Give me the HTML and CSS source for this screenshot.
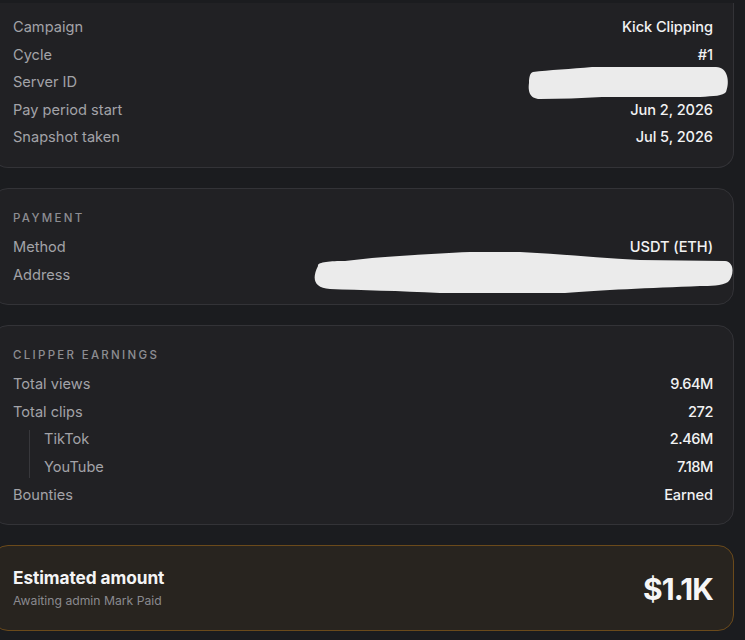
FILE: index.html
```html
<!DOCTYPE html>
<html lang="en">
<head>
<meta charset="utf-8">
<title>Payout details</title>
<link rel="stylesheet" href="styles.css">
</head>
<body>
<div class="topstrip"></div>
<main class="stack">
  <section class="card card-first">
    <div class="row"><span class="label">Campaign</span><span class="value">Kick Clipping</span></div>
    <div class="row"><span class="label">Cycle</span><span class="value">#1</span></div>
    <div class="row"><span class="label">Server ID</span><span class="value"></span></div>
    <div class="row"><span class="label">Pay period start</span><span class="value">Jun 2, 2026</span></div>
    <div class="row"><span class="label">Snapshot taken</span><span class="value">Jul 5, 2026</span></div>
  </section>

  <section class="card card-payment">
    <h2 class="heading">Payment</h2>
    <div class="row"><span class="label">Method</span><span class="value">USDT (ETH)</span></div>
    <div class="row"><span class="label">Address</span><span class="value"></span></div>
  </section>

  <section class="card card-earnings">
    <h2 class="heading">Clipper earnings</h2>
    <div class="row"><span class="label">Total views</span><span class="value num">9.64M</span></div>
    <div class="row"><span class="label">Total clips</span><span class="value num">272</span></div>
    <div class="subgroup">
      <div class="subrow"><span class="label">TikTok</span><span class="value num">2.46M</span></div>
      <div class="subrow"><span class="label">YouTube</span><span class="value num">7.18M</span></div>
    </div>
    <div class="row"><span class="label">Bounties</span><span class="value">Earned</span></div>
  </section>

  <section class="card card-total">
    <div class="total-text">
      <div class="total-title">Estimated amount</div>
      <div class="total-sub">Awaiting admin Mark Paid</div>
    </div>
    <div class="total-amount">$1.1K</div>
  </section>
</main>

<svg class="redactions" width="745" height="640" viewBox="0 0 745 640" aria-hidden="true">
  <path fill="#ebebeb" d="M 533 72 C 548 70, 572 69, 592 67 L 716 67 C 728 67, 730 82, 726 92 C 723 96, 714 96, 700 97 L 602 97 C 582 98, 560 99, 540 99 C 529 99, 528 90, 529 83 C 529 77, 530 73, 533 72 Z"/>
  <path fill="#ebebeb" d="M 318 266 C 317 262, 330 261, 345 261 L 372 258 C 400 256, 440 253, 470 252 L 520 252 C 560 254, 600 258, 640 260 L 725 261 C 735 262, 734 276, 728 282 C 722 286, 710 286, 700 286 C 650 288, 600 290, 565 293 L 440 293 C 400 291, 360 290, 330 289 C 313 288, 312 278, 318 266 Z"/>
</svg>
</body>
</html>
```

FILE: styles.css
```css
* { box-sizing: border-box; }

html, body {
  margin: 0;
  padding: 0;
  background: #1b1c1f;
  font-family: Inter, "Liberation Sans", sans-serif;
  color: #f2f2f3;
  overflow: hidden;
}

body {
  position: relative;
  width: 745px;
  height: 640px;
}

.topstrip {
  height: 3px;
  background: #1b1c1f;
}

.stack {
  margin-left: -8px;
  width: 742px;
  display: flex;
  flex-direction: column;
  gap: 20px;
}

.card {
  background: #212124;
  border: 1px solid #333337;
  border-radius: 16px;
  padding: 21px 20px 16px;
  display: flex;
  flex-direction: column;
}

.card-first {
  border-top: none;
  border-radius: 0 0 16px 16px;
  padding-top: 11px;
  padding-bottom: 15px;
}

.card-payment {
  padding-bottom: 15px;
}

.card-earnings {
  padding-bottom: 15px;
}

.heading {
  margin: 0 0 7px;
  font-size: 11.5px;
  line-height: 17px;
  font-weight: 500;
  letter-spacing: 0.2em;
  text-transform: uppercase;
  color: #8d8d92;
}

.row, .subrow {
  display: flex;
  justify-content: space-between;
  align-items: center;
  font-size: 14.6px;
  line-height: 19.6px;
}

.row { padding: 4px 0; }

.subgroup {
  margin: 4px 0 4px 16px;
  padding-left: 14px;
  border-left: 1px solid #38383c;
  display: flex;
  flex-direction: column;
  gap: 8px;
}

.label {
  color: #a3a3a8;
}

.value {
  color: #f2f2f3;
  font-weight: 500;
  letter-spacing: -0.005em;
}

.value.num {
  letter-spacing: -0.03em;
}

.card-total {
  background: #28241f;
  border-color: #6b4a1b;
  padding: 21px 20px;
  flex-direction: row;
  justify-content: space-between;
  align-items: center;
}

.total-title {
  font-size: 17.3px;
  line-height: 22px;
  font-weight: 700;
  letter-spacing: -0.005em;
  color: #f4f4f5;
  margin-bottom: 4px;
}

.total-sub {
  font-size: 12.2px;
  line-height: 16px;
  color: #8a8a8f;
}

.total-amount {
  font-size: 30px;
  line-height: 34px;
  font-weight: 700;
  letter-spacing: -0.03em;
  color: #f6f6f7;
  margin-top: 2px;
}

.redactions {
  position: absolute;
  top: 0;
  left: 0;
  pointer-events: none;
}
```
